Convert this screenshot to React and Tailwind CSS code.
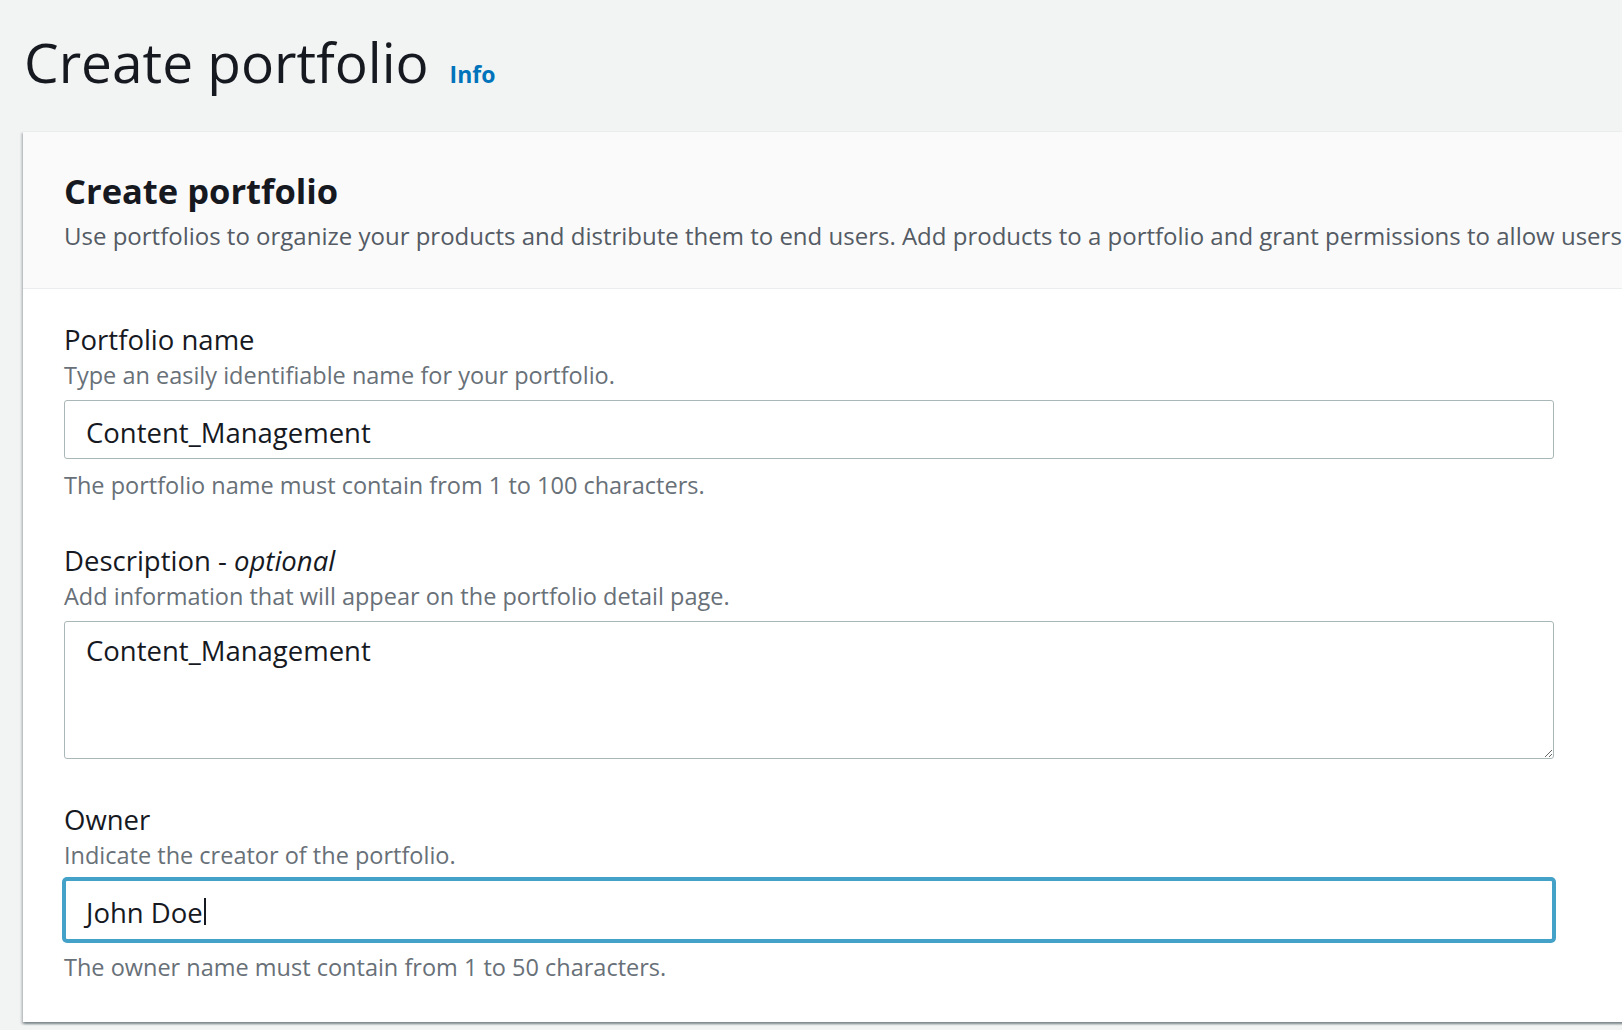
import React from "react";

function Field({ label, description, constraint, className = "", inputGap = "mt-[8px]", children }) {
	return (
		<div className={"flex flex-col " + className}>
			<div className="text-[27.5px] leading-[36px] text-[#16191f]">{label}</div>
			<div className="text-[23.5px] leading-[34px] text-[#687078]">{description}</div>
			<div className={inputGap}>{children}</div>
			{constraint && (
				<div className="mt-[9px] text-[23.5px] leading-[34px] text-[#687078]">
					{constraint}
				</div>
			)}
		</div>
	);
}

export default function App() {
	return (
		<div className="min-h-screen overflow-hidden bg-[#f2f3f3] pl-[23px] pt-[30px] font-['Open_Sans','Noto_Sans',sans-serif] text-[#16191f]">
			{/* page header */}
			<div className="flex items-baseline gap-[21px] pl-[1px]">
				<h1 className="text-[55px] leading-[64px] font-normal">Create portfolio</h1>
				<a className="text-[23px] font-bold text-[#0073bb]">Info</a>
			</div>

			{/* container */}
			<div className="mt-[37px] w-[1700px] bg-white border-t border-[#eaeded] shadow-[0_2px_2px_0_rgba(0,28,36,0.3),2px_2px_2px_0_rgba(0,28,36,0.15),-2px_2px_2px_0_rgba(0,28,36,0.15)]">
				<div className="bg-[#fafafa] border-b border-[#eaeded] pl-[41px] pt-[37px] pb-[34px]">
					<h2 className="text-[34.5px] leading-[44px] font-bold">Create portfolio</h2>
					<p className="mt-[5px] whitespace-nowrap text-[24px] leading-[36px] text-[#545b64]">
						Use portfolios to organize your products and distribute them to end users. Add products to a portfolio and grant permissions to allow users to view and launch them.
					</p>
				</div>

				<div className="pl-[41px] pt-[33px] pb-[38px]">
					<Field
						label="Portfolio name"
						description="Type an easily identifiable name for your portfolio."
						constraint="The portfolio name must contain from 1 to 100 characters."
					>
						<div className="flex h-[59px] w-[1490px] items-center rounded-[3px] border border-[#aab7b8] bg-white pl-[21px] pt-[6px] text-[27.5px]">
							Content_Management
						</div>
					</Field>

					<Field
						className="mt-[41px]"
						label={
							<>
								Description - <i>optional</i>
							</>
						}
						description="Add information that will appear on the portfolio detail page."
					>
						<textarea
							readOnly
							defaultValue="Content_Management"
							className="block h-[138px] w-[1490px] resize-y rounded-[3px] border border-[#aab7b8] bg-white pl-[21px] pt-[11px] text-[27.5px] leading-[36px] text-[#16191f] outline-none"
						/>
					</Field>

					<Field
						className="mt-[43px]"
						inputGap="mt-[7px]"
						label="Owner"
						description="Indicate the creator of the portfolio."
						constraint="The owner name must contain from 1 to 50 characters."
					>
						<div className="flex h-[62px] w-[1490px] items-center rounded-[3px] border-2 border-[#44a1c8] bg-white pl-[20px] pt-[5px] text-[27.5px] shadow-[0_0_0_2px_#44a1c8]">
							<span>John Doe</span>
							<span className="ml-[1px] mb-[2px] inline-block h-[27px] w-[2px] bg-[#16191f]" />
						</div>
					</Field>
				</div>
			</div>
		</div>
	);
}
